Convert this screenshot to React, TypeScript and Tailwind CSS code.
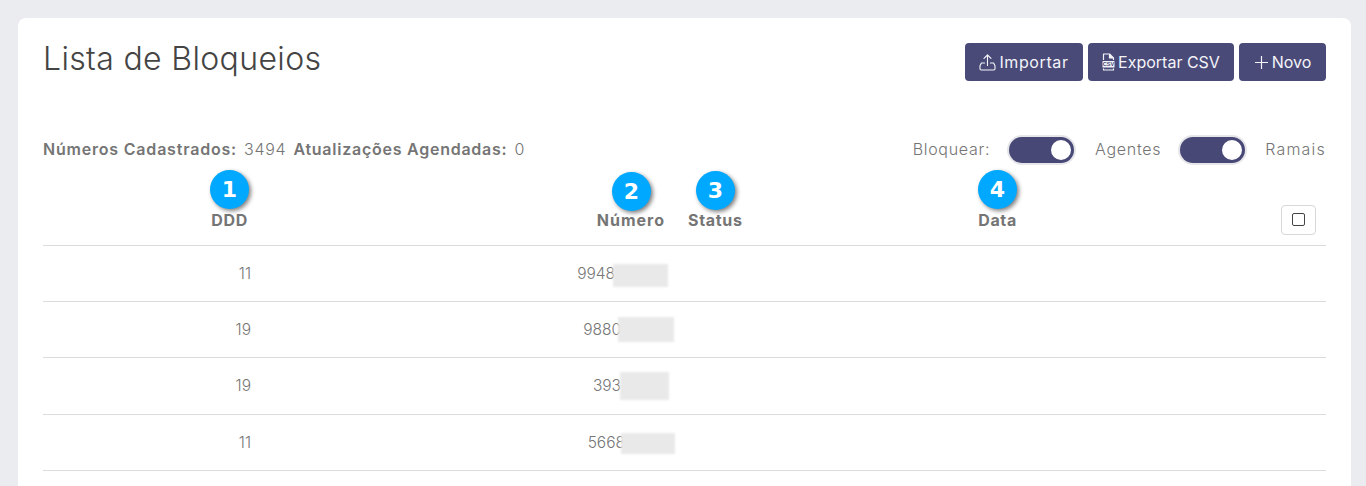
const rows = [
  { ddd: '11', num: '9948', box: 'w-[55px] h-[23px] -ml-[2px] mr-[4px] mt-[5px]' },
  { ddd: '19', num: '9880', box: 'w-[56px] h-[25px] -ml-[3px] -mr-[2px] mt-[0px]' },
  { ddd: '19', num: '393', box: 'w-[49px] h-[28px] -ml-[1px] mr-[3px] mt-[1px]' },
  { ddd: '11', num: '5668', box: 'w-[54px] h-[21px] -ml-[4px] -mr-[3px] mt-[2px]' },
]

function Badge({ n, className }: { n: number; className: string }) {
  return (
    <span
      className={`absolute flex h-[39px] w-[39px] items-center justify-center rounded-full bg-[#00a8ff] text-[22px] font-bold leading-none tracking-normal text-white shadow-[2px_2px_4px_rgba(0,0,0,0.5)] [font-family:'DejaVu_Sans',sans-serif] ${className}`}
    >
      {n}
    </span>
  )
}

function UploadIcon() {
  return (
    <svg width="17" height="17" viewBox="0 0 17 17" fill="none" stroke="currentColor" strokeWidth="1.1" strokeLinecap="round" strokeLinejoin="round">
      <path d="M8.5 11.5V1" />
      <path d="M5 4.4 8.5 1 12 4.4" />
      <path d="M5.6 9H2.4L1 11.8v3c0 .7.5 1.2 1.2 1.2h12.6c.7 0 1.2-.5 1.2-1.2v-3L14.6 9h-3.2" />
    </svg>
  )
}

function CsvIcon() {
  return (
    <svg width="13" height="18" viewBox="0 0 13 18" fill="none" stroke="currentColor" strokeWidth="1.2" strokeLinejoin="round">
      <path d="M1.5 7V1h6l4 4v2" />
      <path d="M7.5 1v4h4" fill="currentColor" />
      <path d="M1.5 15.5v1.5h10v-1.5" />
      <rect x="0.5" y="8" width="12" height="6.5" rx="0.5" fill="currentColor" stroke="none" />
      <text x="6.5" y="13" textAnchor="middle" fontSize="5.5" fontWeight="700" fill="#494a78" stroke="none" fontFamily="Liberation Sans, sans-serif">CSV</text>
    </svg>
  )
}

function PlusIcon() {
  return (
    <svg width="15" height="15" viewBox="0 0 15 15" fill="none" stroke="currentColor" strokeWidth="1.2">
      <path d="M7.5 1v13M1 7.5h13" />
    </svg>
  )
}

function Toggle() {
  return (
    <span className="flex h-[26px] w-[65px] items-center justify-end rounded-full bg-[#484876] pr-[3px] shadow-[0_0_0_2px_#e6e6ea]">
      <span className="h-[20px] w-[20px] rounded-full bg-white" />
    </span>
  )
}

function ActionButton({ icon, label, className }: { icon: React.ReactNode; label: string; className: string }) {
  return (
    <button className={`flex h-[38px] items-center justify-center gap-[3px] rounded-[4px] bg-[#494a78] text-[16px] text-[#f4f4f8] ${className}`}>
      {icon}
      {label}
    </button>
  )
}

export default function App() {
  return (
    <div className="h-[486px] overflow-hidden bg-[#ebecf0] pl-[18px] pr-[15px] pt-[18px] text-[#757575] [font-family:Inter,sans-serif]">
      <div className="min-h-[520px] rounded-[8px] bg-white px-[25px] pt-[25px]">
        {/* Header */}
        <div className="flex items-start justify-between">
          <h1 className="-mt-[1px] text-[32px] font-light leading-[34px] tracking-[0.35px] text-[#444444]">Lista de Bloqueios</h1>
          <div className="flex gap-[5px]">
            <ActionButton icon={<UploadIcon />} label="Importar" className="w-[118px] tracking-[0.6px]" />
            <ActionButton icon={<CsvIcon />} label="Exportar CSV" className="w-[146px]" />
            <ActionButton icon={<PlusIcon />} label="Novo" className="w-[87px]" />
          </div>
        </div>

        {/* Totals and switches */}
        <div className="mt-[55px] flex h-[28px] items-center justify-between text-[16px]">
          <div className="flex items-center pb-[2px] tracking-[0.75px]">
            <b className="font-semibold tracking-[0.8px]">Números Cadastrados:</b>
            <span className="ml-[7px] font-light">3494</span>
            <b className="ml-[7px] font-semibold">Atualizações Agendadas:</b>
            <span className="ml-[7px] font-light">0</span>
          </div>
          <div className="flex items-center font-light tracking-[0.7px]">
            <span className="pb-[3px]">Bloquear:</span>
            <span className="ml-[19px]"><Toggle /></span>
            <span className="ml-[21px] pb-[3px]">Agentes</span>
            <span className="ml-[19px]"><Toggle /></span>
            <span className="ml-[20px] pb-[3px] tracking-[1.2px]">Ramais</span>
          </div>
        </div>

        {/* Table */}
        <table className="w-full table-fixed border-collapse text-[15.5px]">
          <colgroup>
            <col className="w-[212px]" />
            <col className="w-[417px]" />
            <col className="w-[180px]" />
            <col className="w-[165px]" />
            <col />
          </colgroup>
          <thead className="text-[16px] tracking-[0.7px]">
            <tr className="h-[81px] border-b border-[#dcdcdc]">
              <th className="relative pr-[7px] pt-[31px] text-right font-bold">
                <Badge n={1} className="right-[6px] top-[6px]" />
                DDD
              </th>
              <th className="relative pr-[7px] pt-[31px] text-right font-bold tracking-[1px]">
                <Badge n={2} className="right-[21px] top-[8px]" />
                Número
              </th>
              <th className="relative pl-[16px] pt-[31px] text-left font-bold">
                <Badge n={3} className="left-[24px] top-[7px]" />
                Status
              </th>
              <th className="relative pt-[31px] text-right font-bold">
                <Badge n={4} className="right-[0px] top-[6px]" />
                Data
              </th>
              <th className="pb-[10px] pr-[10px] text-right align-bottom">
                <button className="inline-flex h-[30px] w-[35px] items-center justify-center rounded-[4px] border border-[#d8d8d8] bg-white align-bottom">
                  <span className="h-[13px] w-[13px] rounded-[2px] border border-[#444444]" />
                </button>
              </th>
            </tr>
          </thead>
          <tbody className="font-light">
            {rows.map((row, i) => (
              <tr key={i} className="h-[56.4px] border-b border-[#dcdcdc]">
                <td className="pr-[4px] text-right">{row.ddd}</td>
                <td>
                  <div className="flex items-center justify-end">
                    <span>{row.num}</span>
                    <span className={`bg-[#e9e9e9] blur-[1px] ${row.box}`} />
                  </div>
                </td>
                <td />
                <td />
                <td />
              </tr>
            ))}
          </tbody>
        </table>
      </div>
    </div>
  )
}
